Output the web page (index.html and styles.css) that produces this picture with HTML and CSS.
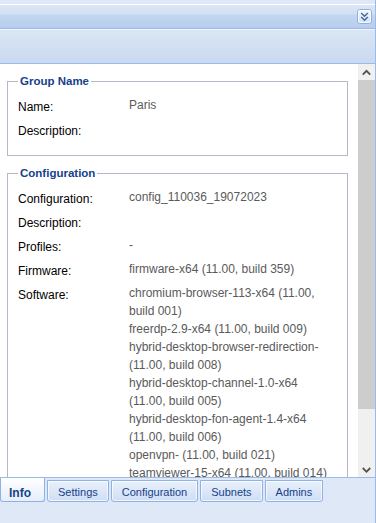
FILE: index.html
```html
<!DOCTYPE html>
<html lang="en">
<head>
    <meta charset="UTF-8">
    <title>Group Info</title>
    <link rel="stylesheet" href="styles.css">
</head>
<body>
    <div class="panel">
        <div class="header">
            <span class="tool">
                <svg width="15" height="15" viewBox="0 0 15 15">
                    <defs>
                        <linearGradient id="toolbg" x1="0" y1="0" x2="0" y2="1">
                            <stop offset="0" stop-color="#f4f8fd"/>
                            <stop offset="1" stop-color="#d3e2f6"/>
                        </linearGradient>
                    </defs>
                    <rect x="0.5" y="0.5" width="14" height="14" rx="2.5" fill="url(#toolbg)" stroke="#8fb0dc"/>
                    <rect x="1.5" y="1.5" width="12" height="12" rx="1.5" fill="none" stroke="#ffffff" stroke-opacity="0.8"/>
                    <polyline points="4.2,4 7.5,7.2 10.8,4" fill="none" stroke="#41679f" stroke-width="1.4"/>
                    <polyline points="4.2,8 7.5,11.2 10.8,8" fill="none" stroke="#41679f" stroke-width="1.4"/>
                </svg>
            </span>
        </div>
        <div class="toolbar"></div>

        <div class="body">
            <div class="scroll-area">
                <fieldset class="group">
                    <legend>Group Name</legend>
                    <div class="row">
                        <div class="label">Name:</div>
                        <div class="value">Paris</div>
                    </div>
                    <div class="row">
                        <div class="label">Description:</div>
                        <div class="value"></div>
                    </div>
                </fieldset>

                <fieldset class="group">
                    <legend>Configuration</legend>
                    <div class="row">
                        <div class="label">Configuration:</div>
                        <div class="value">config_110036_19072023</div>
                    </div>
                    <div class="row">
                        <div class="label">Description:</div>
                        <div class="value"></div>
                    </div>
                    <div class="row">
                        <div class="label">Profiles:</div>
                        <div class="value">-</div>
                    </div>
                    <div class="row">
                        <div class="label">Firmware:</div>
                        <div class="value">firmware-x64 (11.00, build 359)</div>
                    </div>
                    <div class="row">
                        <div class="label">Software:</div>
                        <div class="value">
                            <div>chromium-browser-113-x64 (11.00, build 001)</div>
                            <div>freerdp-2.9-x64 (11.00, build 009)</div>
                            <div>hybrid-desktop-browser-redirection- (11.00, build 008)</div>
                            <div>hybrid-desktop-channel-1.0-x64 (11.00, build 005)</div>
                            <div>hybrid-desktop-fon-agent-1.4-x64 (11.00, build 006)</div>
                            <div>openvpn- (11.00, build 021)</div>
                            <div>teamviewer-15-x64 (11.00, build 014)</div>
                        </div>
                    </div>
                </fieldset>
            </div>

            <div class="scrollbar">
                <div class="sb-btn">
                    <svg width="17" height="16" viewBox="0 0 17 16">
                        <polyline points="4.8,10.6 8.5,6.8 12.2,10.6" fill="none" stroke="#505050" stroke-width="1.8"/>
                    </svg>
                </div>
                <div class="sb-thumb"></div>
                <div class="sb-track"></div>
                <div class="sb-btn">
                    <svg width="17" height="16" viewBox="0 0 17 16">
                        <polyline points="4.8,7 8.5,10.8 12.2,7" fill="none" stroke="#505050" stroke-width="1.8"/>
                    </svg>
                </div>
            </div>
        </div>

        <div class="tabs">
            <div class="tab active">Info</div>
            <div class="tab">Settings</div>
            <div class="tab">Configuration</div>
            <div class="tab">Subnets</div>
            <div class="tab">Admins</div>
        </div>
    </div>
</body>
</html>
```

FILE: styles.css
```css
body {
    margin: 0;
    font-family: "Liberation Sans", Arial, sans-serif;
    overflow: hidden;
}
.panel {
    box-sizing: border-box;
    width: 376px;
    height: 523px;
    border-right: 1px solid #99bbe8;
    background-color: #dfe8f6;
    display: flex;
    flex-direction: column;
}
.header {
    box-sizing: border-box;
    height: 29px;
    flex-shrink: 0;
    border-bottom: 1px solid #99bbe8;
    padding: 9px 3px 0 0;
    display: flex;
    justify-content: flex-end;
    align-items: flex-start;
    background: linear-gradient(to bottom,
        #dfe8f6 0, #dfe8f6 4px,
        #ffffff 4px, #ffffff 5px,
        #dbe6f6 5px, #d2e0f4 14px,
        #c3d6f0 15px, #b7cdee 28px);
}
.tool {
    display: block;
    width: 15px;
    height: 15px;
}
.tool svg {
    display: block;
}
.toolbar {
    box-sizing: border-box;
    height: 35px;
    flex-shrink: 0;
    border-bottom: 1px solid #99bbe8;
    background: linear-gradient(to bottom,
        #f2f6fc 0, #f2f6fc 1px,
        #dae6f5 1px, #c9d9ef 34px);
}
.body {
    height: 413px;
    flex-shrink: 0;
    display: flex;
    background-color: #ffffff;
}
.scroll-area {
    flex: 1;
    overflow: hidden;
    padding-top: 10px;
}
.group {
    margin: 0 10px 0 7px;
    padding: 8px 10px 11px 10px;
    border: 1px solid #b5b8c8;
    min-width: 0;
}
.group + .group {
    margin-top: 10px;
}
.group legend {
    padding: 0 2px;
    font-size: 11.5px;
    font-weight: bold;
    line-height: 14px;
    color: #15428b;
}
.row {
    display: flex;
    margin-bottom: 4px;
}
.label {
    width: 111px;
    flex-shrink: 0;
    padding-top: 2px;
    font-size: 12px;
    line-height: 18px;
    color: #000000;
}
.value {
    flex: 1;
    min-width: 0;
    font-size: 12px;
    line-height: 18px;
    color: #5a5a5a;
}
.scrollbar {
    width: 17px;
    flex-shrink: 0;
    display: flex;
    flex-direction: column;
    background-color: #f0f0f0;
}
.sb-btn {
    height: 16px;
}
.sb-btn svg {
    display: block;
}
.sb-thumb {
    height: 329px;
    background-color: #cdcdcd;
}
.sb-track {
    flex: 1;
}
.tabs {
    flex: 1;
    border-top: 1px solid #99bbe8;
    display: flex;
    align-items: flex-start;
    gap: 2px;
}
.tab {
    margin-top: 2px;
    padding: 3px 10px 0 10px;
    height: 17px;
    line-height: 17px;
    font-size: 11px;
    color: #15428b;
    border: 1px solid #8db2e3;
    border-radius: 0 0 3px 3px;
    background: linear-gradient(to bottom, #e9f0fb, #cfdef4);
    box-shadow: inset 0 0 0 1px rgba(255, 255, 255, 0.7);
    white-space: nowrap;
}
.tab.active {
    margin-top: 0;
    padding: 8px 13px 0 8px;
    height: 15px;
    line-height: 15px;
    font-size: 12px;
    font-weight: bold;
    border-top: none;
    background: linear-gradient(to bottom, #ffffff, #e6eefa);
    box-shadow: none;
}
```
